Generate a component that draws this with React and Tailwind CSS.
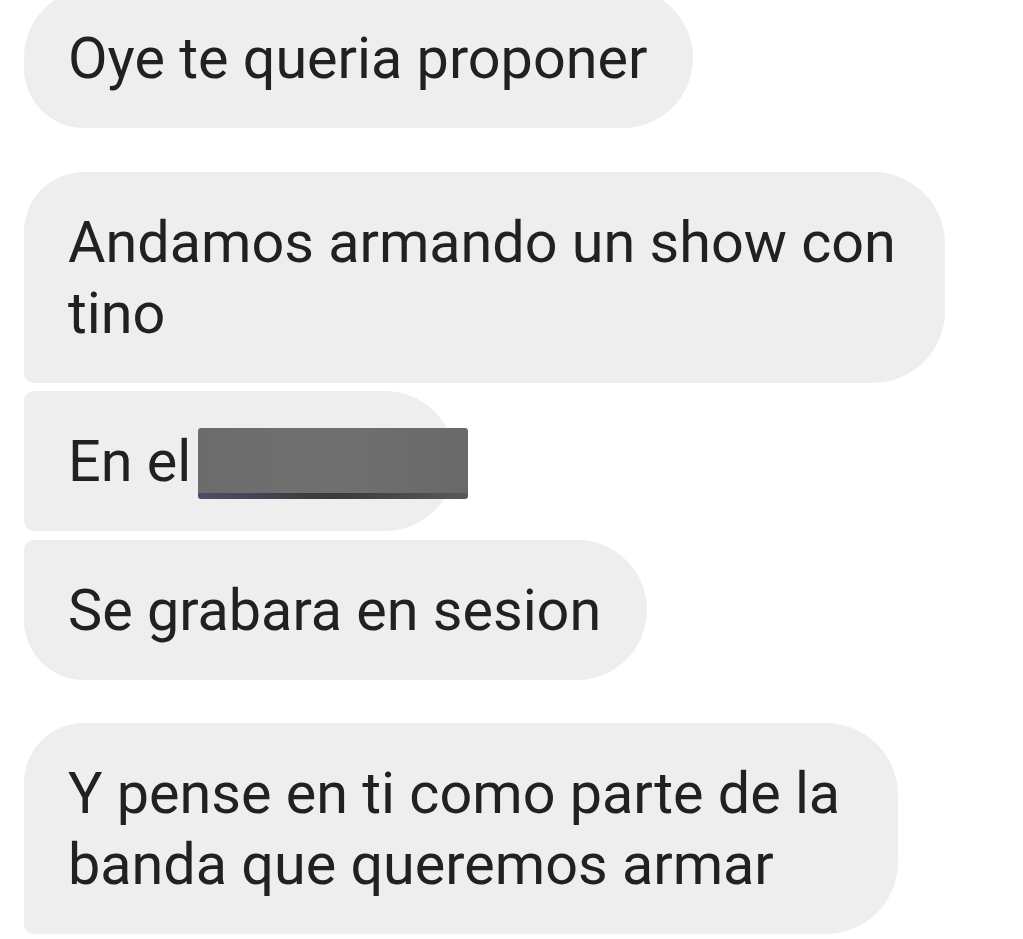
export default function App() {
  const bubble =
    'bg-[#eeeeee] text-[#212121] pl-[44px] pr-[46px] py-[34.5px] leading-[71px] text-[57.5px]';
  return (
    <div
      className="min-h-[939px] w-[1023px] bg-white overflow-hidden"
      style={{ fontFamily: 'Roboto, "Noto Sans", sans-serif' }}
    >
      <div className="flex flex-col items-start pl-[24px] -mt-[12px]">
        <div className={`${bubble} rounded-t-[70px] rounded-r-[70px] rounded-bl-[60px]`}>
          Oye te queria proponer
        </div>

        <div className={`${bubble} mt-[44px] max-w-[921px] rounded-tl-[60px] rounded-r-[72px] rounded-bl-[10px]`}>
          Andamos armando un show con tino
        </div>

        <div className={`${bubble} relative mt-[8px] rounded-l-[10px] rounded-r-[70px]`}>
          En el <span className="inline-block w-[204px]" />
          {/* tapado */}
          <div className="absolute left-[174px] top-[37px] w-[270px] h-[71px] flex flex-col rounded-[3px] overflow-hidden">
            <div className="flex-1 bg-gradient-to-r from-[#6c6c6c] via-[#707070] to-[#696969]" />
            <div className="h-[6px] bg-gradient-to-r from-[#4a4f66] via-[#3a3a3a] to-[#5a5a5a]" />
          </div>
        </div>

        <div className={`${bubble} mt-[9px] rounded-tl-[10px] rounded-bl-[60px] rounded-r-[70px]`}>
          Se grabara en sesion
        </div>

        <div className={`${bubble} mt-[43px] max-w-[874px] rounded-tl-[60px] rounded-r-[72px] rounded-bl-[10px]`}>
          Y pense en ti como parte de la banda que queremos armar
        </div>
      </div>
    </div>
  );
}
